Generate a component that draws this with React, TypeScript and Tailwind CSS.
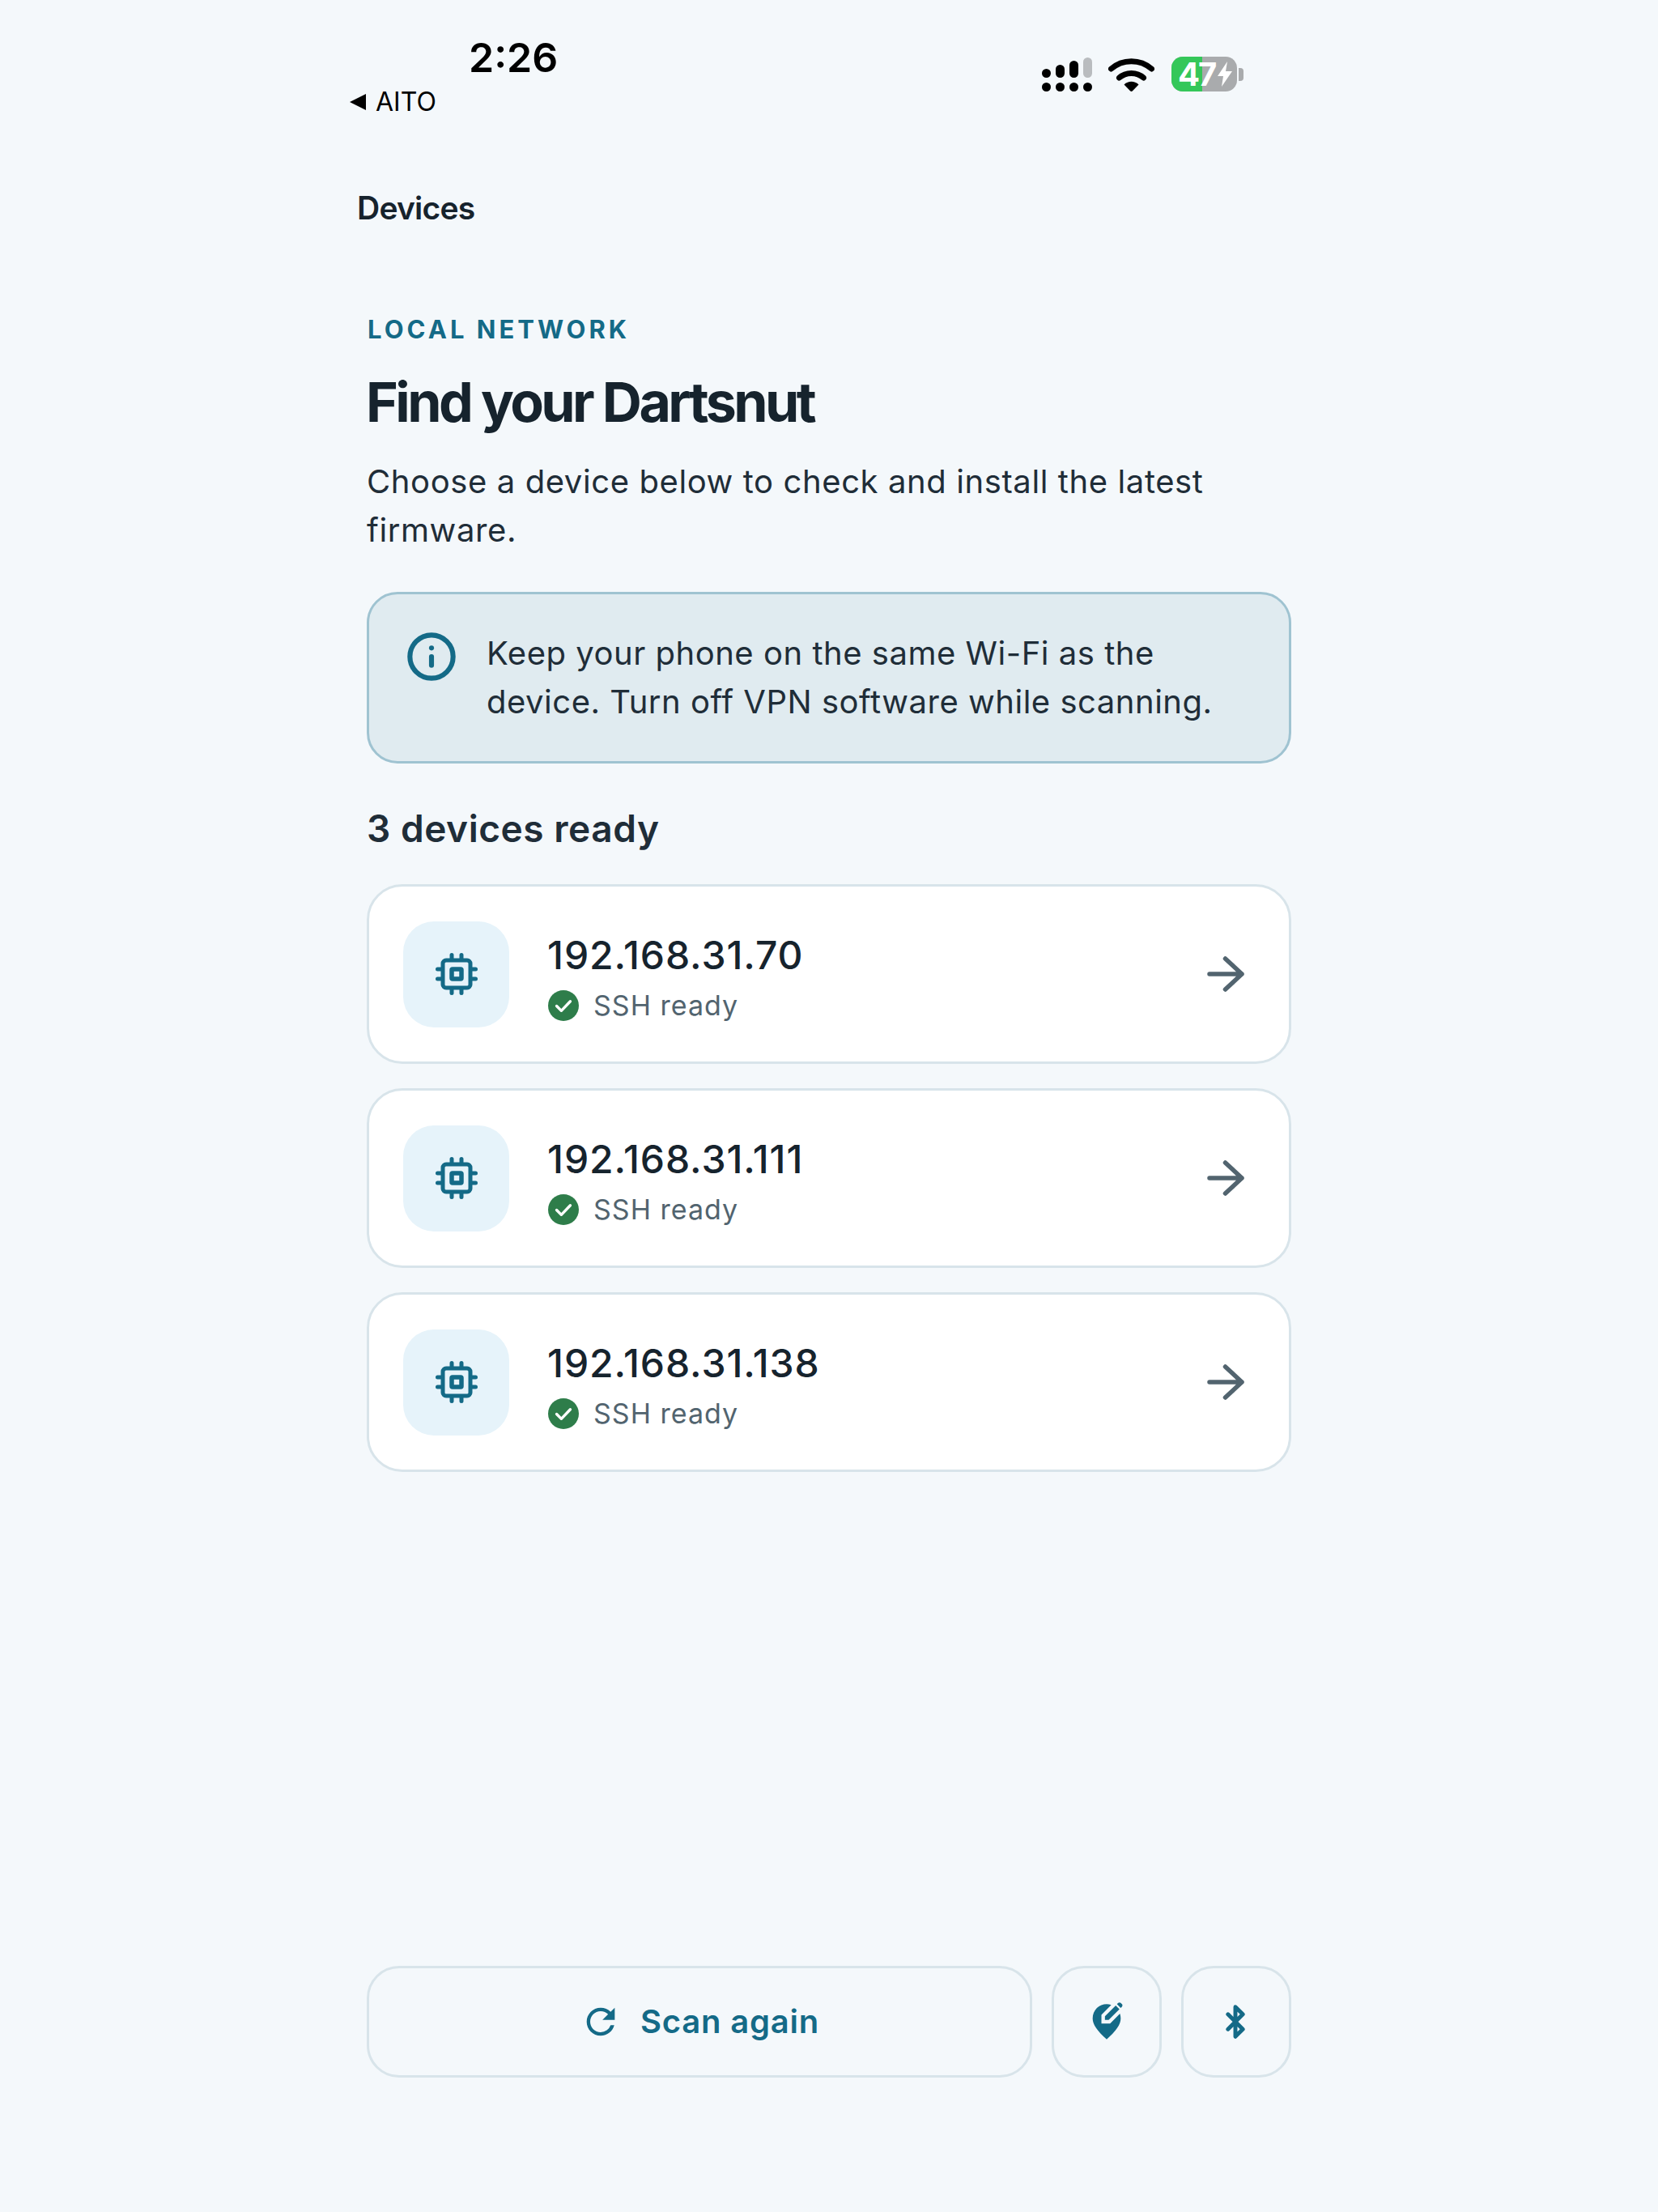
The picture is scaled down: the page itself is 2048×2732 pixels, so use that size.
import React from "react";
import { MdEditLocationAlt, MdRefresh } from "react-icons/md";
import { Bluetooth, Info } from "lucide-react";

function Chip() {
  return (
    <svg width="52" height="52" viewBox="0 0 52 52" fill="none" stroke="#146a87" strokeLinecap="round">
      <rect x="9" y="9" width="34" height="34" rx="4" strokeWidth="5" />
      <rect x="20" y="20" width="12" height="12" rx="1" strokeWidth="5.5" />
      <path d="M20 2.500v5M32 2.500v5M20 44.500v5M32 44.500v5M2.500 20h5M2.500 32h5M44.500 20h5M44.500 32h5" strokeWidth="5" />
    </svg>
  );
}

function Check() {
  return (
    <svg width="38" height="38" viewBox="0 0 36 36" className="ml-[1px]">
      <circle cx="18" cy="18" r="18" fill="#2e7d4a" />
      <path d="M10 18.500l5.500 5.500L26 13" fill="none" stroke="#fff" strokeWidth="3.200" strokeLinecap="round" strokeLinejoin="round" />
    </svg>
  );
}

function Arrow() {
  return (
    <svg width="46" height="44" viewBox="0 0 46 44" fill="none" stroke="#52646f" strokeWidth="5.500" strokeLinecap="round" strokeLinejoin="round">
      <path d="M3 22h40M22.500 3L43 22 22.500 41" />
    </svg>
  );
}

function DeviceCard({ ip }: { ip: string }) {
  return (
    <div className="flex h-[222px] items-center rounded-[44px] border-[3px] border-[#d8e4ea] bg-white pl-[42px] pr-[55px]">
      <div className="flex h-[131px] w-[131px] items-center justify-center rounded-[38px] bg-[#e6f3fa]">
        <Chip />
      </div>
      <div className="ml-[47px] flex flex-1 flex-col pt-[9px]">
        <div className="text-[48px] leading-[56px] font-[550] tracking-[0.02em] text-[#16232d]">{ip}</div>
        <div className="mt-[12px] flex items-center">
          <Check />
          <span className="ml-[18px] text-[34px] leading-[44px] tracking-[0.03em] text-[#52646f]">SSH ready</span>
        </div>
      </div>
      <Arrow />
    </div>
  );
}

function StatusIcons() {
  return (
    <div className="flex items-center">
      <svg width="62" height="42" viewBox="0 0 62 42">
        <g fill="#000">
          <rect x="0" y="14" width="11" height="11" rx="5.500" />
          <rect x="17" y="9" width="11" height="16" rx="5.500" />
          <rect x="34" y="4" width="11" height="21" rx="5.500" />
          <circle cx="5.500" cy="36.500" r="5.500" />
          <circle cx="22.500" cy="36.500" r="5.500" />
          <circle cx="39.500" cy="36.500" r="5.500" />
          <circle cx="56.500" cy="36.500" r="5.500" />
        </g>
        <rect x="51" y="0" width="11" height="25" rx="5.500" fill="#b9bcbf" />
      </svg>
      <svg className="ml-[20px]" width="57" height="42" viewBox="0 0 57 42" fill="none">
        <path d="M3.500 14C17.500 1.500 39.500 1.500 53.500 14" stroke="#000" strokeWidth="7" strokeLinecap="round" />
        <path d="M13.500 25C21.500 17.500 35.500 17.500 43.500 25" stroke="#000" strokeWidth="7" strokeLinecap="round" />
        <path d="M19.500 33.500C24.500 28.500 32.500 28.500 37.500 33.500L30 41.300C29 42.200 28 42.200 27 41.300Z" fill="#000" />
      </svg>
      <div className="ml-[21px] flex h-[43px] items-center">
        <div className="relative flex h-[43px] w-[81px] rounded-[14px] bg-[#a9abad]">
          <div className="h-full w-[38px] rounded-l-[14px] bg-[#34c759]" />
          <span className="absolute left-[8px] top-0 text-[40px] leading-[43px] font-bold tracking-[-0.05em] text-white">47</span>
          <svg className="absolute left-[56px] top-[6px]" width="20" height="31" viewBox="0 0 20 31">
            <path d="M13 0L1 18h7L6 31 19 12h-8z" fill="#fff" />
          </svg>
        </div>
        <div className="ml-[2px] h-[16px] w-[6px] rounded-r-[4px] bg-[#a9abad]" />
      </div>
    </div>
  );
}

export default function App() {
  return (
    <div className="min-h-[2732px] bg-[#f4f8fb] [font-family:'Inter','Liberation_Sans',sans-serif]">
      <div className="mx-auto flex w-[1188px] items-start justify-between pl-[1px] pr-[82px] pt-[42px]">
        <div className="flex flex-col">
          <div className="ml-[148px] text-[50px] leading-[58px] font-semibold text-black">2:26</div>
          <div className="mt-[7px] flex items-center">
            <svg width="21" height="20" viewBox="0 0 21 20">
              <path d="M21 0v20L1 10z" fill="#000" />
            </svg>
            <span className="ml-[12px] text-[32px] leading-[38px] text-black">AITO</span>
          </div>
        </div>
        <div className="mt-[28px]">
          <StatusIcons />
        </div>
      </div>

      <div className="mx-auto w-[1142px]">
        <div className="-ml-[12px] mt-[88px] text-[39px] leading-[48px] font-semibold tracking-[-0.02em] text-[#16232d]">Devices</div>
        <div className="ml-[1px] mt-[108px] text-[31px] leading-[36px] font-bold tracking-[0.13em] text-[#146a87]">LOCAL NETWORK</div>
        <div className="-ml-[1px] mt-[31px] text-[68px] leading-[80px] font-bold tracking-[-0.052em] text-[#16232d]">Find your Dartsnut</div>
        <p className="mt-[29px] w-[1100px] text-[40px] leading-[60px] tracking-[0.015em] text-[#1f2d38]">
          Choose a device below to check and install the latest firmware.
        </p>

        <div className="mt-[46px] flex h-[212px] items-start rounded-[38px] border-[3px] border-[#9fc3d1] bg-[#e0ebf0] pl-[45px] pt-[43px]">
          <Info size={64} strokeWidth={2.300} color="#146a87" className="mt-[2px] shrink-0" />
          <p className="ml-[36px] text-[40px] leading-[60px] tracking-[0.013em] text-[#1f2d38]">
            Keep your phone on the same Wi-Fi as the
            <br />
            device. Turn off VPN software while scanning.
          </p>
        </div>

        <div className="mt-[52px] text-[46px] leading-[56px] font-semibold tracking-[0.012em] text-[#1f2d38]">3 devices ready</div>

        <div className="mt-[41px] flex flex-col gap-[30px]">
          <DeviceCard ip="192.168.31.70" />
          <DeviceCard ip="192.168.31.111" />
          <DeviceCard ip="192.168.31.138" />
        </div>

        <div className="mt-[610px] flex gap-[24px]">
          <button className="flex h-[138px] flex-1 items-center justify-center rounded-[40px] border-[3px] border-[#d8e4ea] text-[#146a87]">
            <MdRefresh size={52} />
            <span className="ml-[23px] text-[40px] leading-[50px] font-semibold tracking-[0.02em]">Scan again</span>
          </button>
          <button className="flex h-[138px] w-[136px] items-center justify-center rounded-[40px] border-[3px] border-[#d8e4ea] text-[#146a87]">
            <MdEditLocationAlt size={52} />
          </button>
          <button className="flex h-[138px] w-[136px] items-center justify-center rounded-[40px] border-[3px] border-[#d8e4ea] text-[#146a87]">
            <Bluetooth size={44} strokeWidth={2.700} className="-ml-[2px]" />
          </button>
        </div>
      </div>
    </div>
  );
}
